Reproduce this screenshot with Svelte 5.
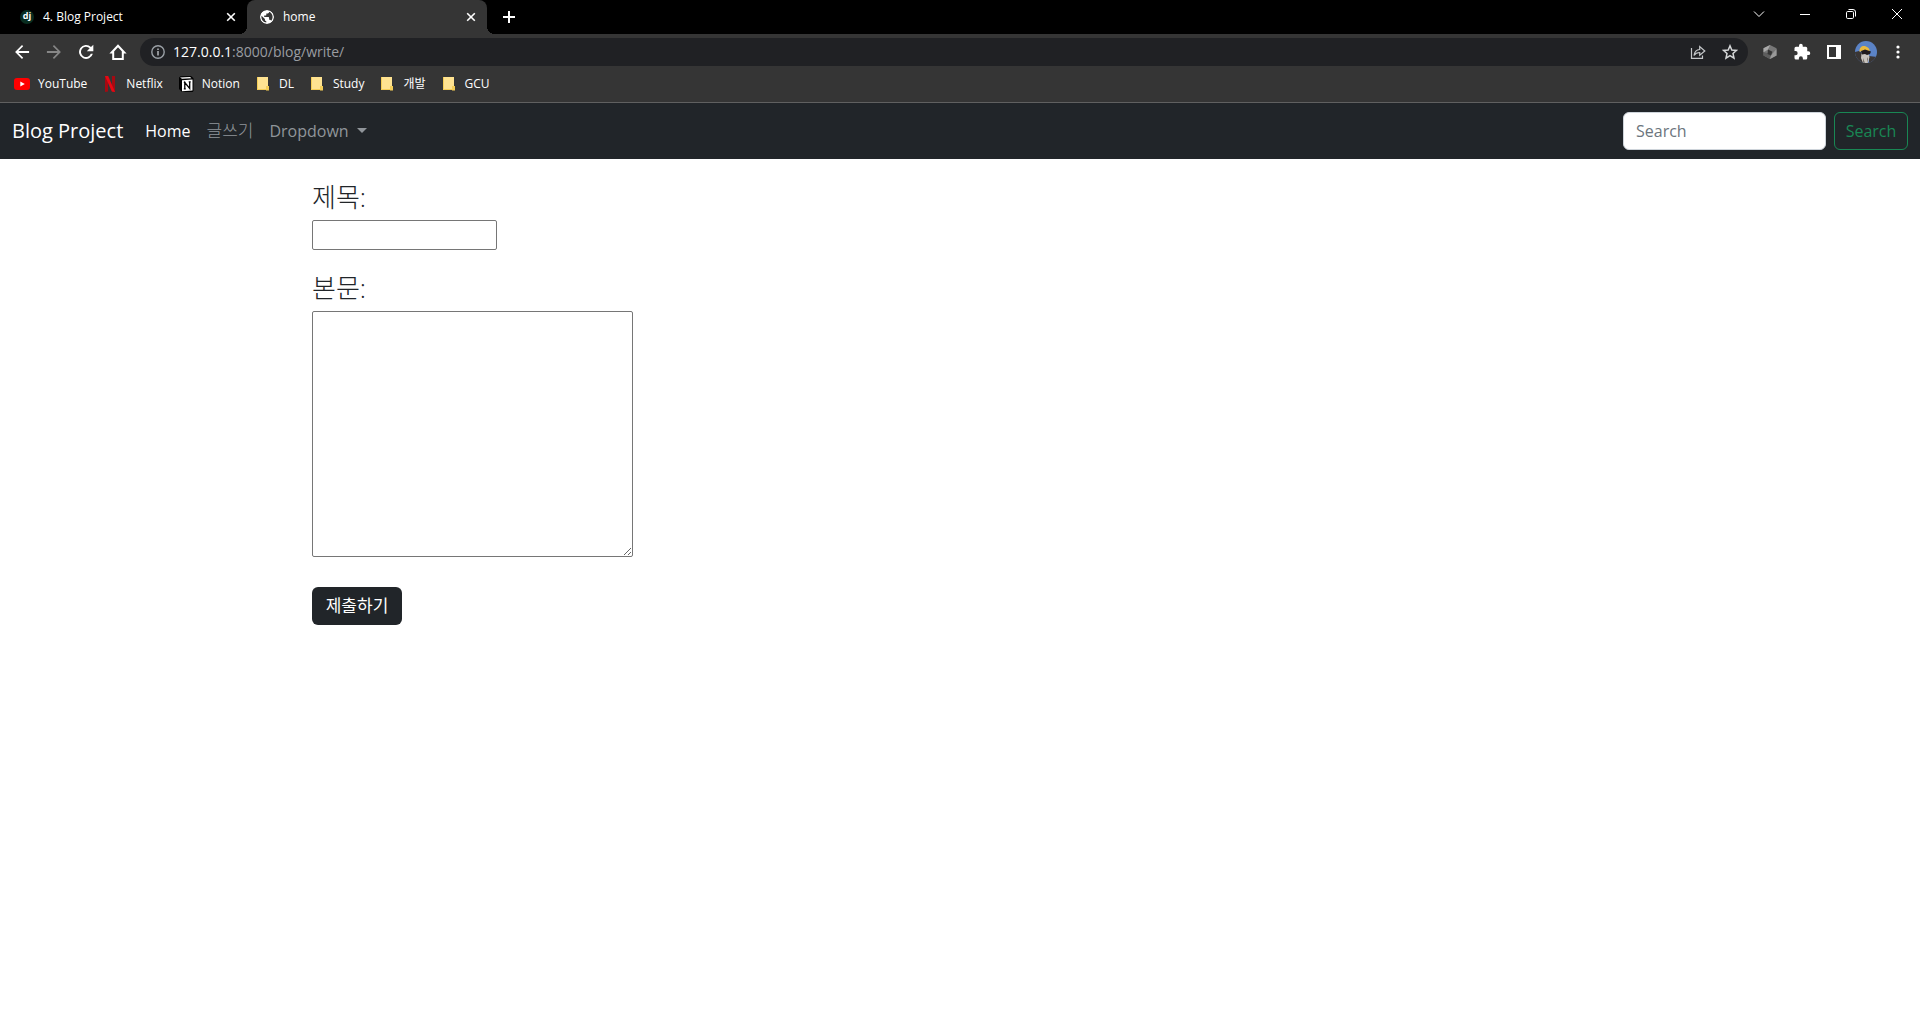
<script lang="ts">
	let title = $state('');
	let content = $state('');
	let query = $state('');

	const tabs = [
		{ title: '4. Blog Project', icon: 'django', active: false },
		{ title: 'home', icon: 'globe', active: true }
	];

	const bookmarks = [
		{ label: 'YouTube', icon: 'youtube' },
		{ label: 'Netflix', icon: 'netflix' },
		{ label: 'Notion', icon: 'notion' },
		{ label: 'DL', icon: 'folder' },
		{ label: 'Study', icon: 'folder' },
		{ label: '개발', icon: 'folder' },
		{ label: 'GCU', icon: 'folder' }
	];
</script>

<div class="browser">
	<div class="tab-strip">
		{#each tabs as tab}
			<div class="tab" class:active={tab.active}>
				{#if tab.icon === 'django'}
					<span class="django">dj</span>
				{:else}
					<svg class="favicon" viewBox="2 2 20 20">
						<path d="M12 2C6.480 2 2 6.480 2 12s4.480 10 10 10 10-4.480 10-10S17.520 2 12 2zm-1 17.930c-3.950-.49-7-3.850-7-7.930 0-.62.08-1.210.21-1.790L9 15v1c0 1.100.9 2 2 2v1.930zm6.900-2.540c-.26-.81-1-1.390-1.900-1.390h-1v-3c0-.55-.45-1-1-1H8v-2h2c.55 0 1-.45 1-1V7h2c1.100 0 2-.9 2-2v-.41c2.930 1.190 5 4.060 5 7.410 0 2.080-.8 3.970-2.100 5.390z" fill="#fff" />
					</svg>
				{/if}
				<span class="tab-title">{tab.title}</span>
				<button type="button" class="tab-close" aria-label="Close tab">
					<svg width="10" height="10" viewBox="0 0 10 10"><path d="M1.200 1.200l7.600 7.600M8.800 1.200l-7.600 7.600" stroke="#fff" stroke-width="1.6" /></svg>
				</button>
			</div>
		{/each}
		<button type="button" class="new-tab" aria-label="New tab">
			<svg width="12" height="12" viewBox="0 0 12 12"><path d="M6 0v12M0 6h12" stroke="#fff" stroke-width="2" /></svg>
		</button>
		<div class="window-controls">
			<button type="button" aria-label="Search tabs">
				<svg width="12" height="12" viewBox="0 0 12 12"><path d="M1 3.500l5 5 5-5" /></svg>
			</button>
			<button type="button" aria-label="Minimize">
				<svg width="10" height="10" viewBox="0 0 10 10"><path d="M0 5.500h10" /></svg>
			</button>
			<button type="button" aria-label="Restore">
				<svg width="10" height="10" viewBox="0 0 10 10"><rect x=".5" y="2.500" width="7" height="7" rx="1.200" /><path d="M2.500.5H7A2.500 2.500 0 0 1 9.500 3v4.500" /></svg>
			</button>
			<button type="button" aria-label="Close">
				<svg width="10" height="10" viewBox="0 0 10 10"><path d="M0 0l10 10M10 0L0 10" /></svg>
			</button>
		</div>
	</div>

	<div class="toolbar">
		<button type="button" class="tool" aria-label="Back">
			<svg width="20" height="20" viewBox="0 0 24 24"><path d="M20.500 10.800H7.700l5.700-5.600L12 3.700 3.700 12l8.300 8.300 1.400-1.500-5.700-5.600h12.800z" fill="#fff" /></svg>
		</button>
		<button type="button" class="tool" aria-label="Forward">
			<svg width="20" height="20" viewBox="0 0 24 24"><path d="M3.500 10.800h12.800l-5.700-5.600L12 3.700l8.300 8.300-8.300 8.300-1.400-1.500 5.700-5.600H3.500z" fill="#868686" /></svg>
		</button>
		<button type="button" class="tool" aria-label="Reload">
			<svg width="20" height="20" viewBox="0 0 24 24"><path d="M18 6A8.400 8.400 0 1 0 20.200 14H17.800A6.100 6.100 0 1 1 16.400 7.600L13 11h7.800V3.300z" fill="#fff" /></svg>
		</button>
		<button type="button" class="tool" aria-label="Home">
			<svg width="20" height="20" viewBox="0 0 20 20"><path d="M3.700 10.500L10 3.800l6.300 6.700H14.800V17H5.200v-6.500z" fill="none" stroke="#fff" stroke-width="2" /></svg>
		</button>
		<div class="omnibox">
			<svg width="14" height="14" viewBox="0 0 14 14"><circle cx="7" cy="7" r="6.200" fill="none" stroke="#9aa0a6" stroke-width="1.400" /><path d="M7 6v4.500M7 3.400v1.500" stroke="#b4b8bc" stroke-width="1.500" /></svg>
			<span class="url"><b>127.0.0.1</b>:8000/blog/write/</span>
			<button type="button" class="tool" aria-label="Share">
				<svg width="16" height="16" viewBox="0 0 16 16"><path d="M1.500 4v10.400h11V11.500M4 11.500C4.600 7.500 6.500 5.700 9.700 5.500V2.500L14.800 7l-5.100 4.200V8.500C7 8.500 5.400 9.400 4 11.500z" fill="none" stroke="#c4c7c9" stroke-width="1.200" /></svg>
			</button>
			<button type="button" class="tool" aria-label="Bookmark this page">
				<svg width="16" height="16" viewBox="0 0 16 16"><path d="M8 1.800l1.800 4.200 4.700.4-3.500 3.100 1 4.600L8 11.700l-4 2.400 1-4.600L1.500 6.400l4.700-.4z" fill="none" stroke="#d5d7d8" stroke-width="1.500" /></svg>
			</button>
		</div>
		<button type="button" class="tool" aria-label="Extension">
			<svg width="14" height="16" viewBox="0 0 14 16"><path d="M7 1l6.500 3.300v7.200L7 15 .5 11.500V4.300z" fill="#777" /><path d="M7 1L.5 4.300v4L5 5.500z" fill="#aaa" /><path d="M.5 8.300v3.200L7 15l1-3.500L4.500 9z" fill="#5d5d5d" /><path d="M8 11.500L7 15l6.500-3.500V5z" fill="#999" /><path d="M5 5.500l4.500 2.300L8 11.500 4.500 10z" fill="#353535" /></svg>
		</button>
		<button type="button" class="tool" aria-label="Extensions">
			<svg width="18" height="18" viewBox="0 0 24 24"><path d="M20.500 11H19V7a2 2 0 0 0-2-2h-4V3.500a2.500 2.500 0 0 0-5 0V5H4a2 2 0 0 0-2 2v3.800h1.500a2.700 2.700 0 0 1 0 5.400H2V20a2 2 0 0 0 2 2h3.800v-1.500a2.700 2.700 0 0 1 5.400 0V22H17a2 2 0 0 0 2-2v-4h1.500a2.500 2.500 0 0 0 0-5z" fill="#fff" /></svg>
		</button>
		<button type="button" class="tool" aria-label="Side panel">
			<svg width="14" height="14" viewBox="0 0 14 14"><path d="M0 0h14v14H0zM2 2v10h7V2z" fill="#fff" fill-rule="evenodd" /></svg>
		</button>
		<button type="button" class="tool" aria-label="Profile">
			<svg width="22" height="22" viewBox="0 0 22 22">
				<defs><clipPath id="avatar"><circle cx="11" cy="11" r="11" /></clipPath></defs>
				<g clip-path="url(#avatar)">
					<path d="M0 0h22v22H0z" fill="#5b83c6" />
					<path d="M0 11l4-1 4 3v9H0zM14 15l8 1v6h-8z" fill="#3a3635" />
					<path d="M6.500 12.500l3-1.500 4 1.500 1 3.500-1.500 6H8l-2-5z" fill="#c9c4bd" />
					<path d="M8 17l2 5H8zM12 18l1-2v6z" fill="#77706b" />
					<path d="M4.500 10.500C4 6 8 4 11 5.500c3 1 4 3 3.500 5z" fill="#e9b93e" />
					<path d="M6 10l4-1.500 6 2-1 2.500-3 1-2-1-3 .5z" fill="#211b1d" />
				</g>
			</svg>
		</button>
		<button type="button" class="tool" aria-label="Menu">
			<svg width="4" height="14" viewBox="0 0 4 14"><g fill="#fff"><circle cx="2" cy="2" r="1.600" /><circle cx="2" cy="7" r="1.600" /><circle cx="2" cy="12" r="1.600" /></g></svg>
		</button>
	</div>

	<div class="bookmarks">
		{#each bookmarks as bookmark}
			<a href="#{bookmark.label}">
				<svg width="16" height="16" viewBox="0 0 16 16">
					{#if bookmark.icon === 'youtube'}
						<rect y="2" width="16" height="12" rx="3" fill="#f00" />
						<path d="M6.300 5.500v5L10.800 8z" fill="#fff" />
					{:else if bookmark.icon === 'netflix'}
						<path d="M3 0h3v15.500L3 16zM10 0h3v16l-3-.5z" fill="#a50a12" />
						<path d="M3 0h3.200L13 16l-3.200-.5z" fill="#e50914" />
					{:else if bookmark.icon === 'notion'}
						<path d="M1 1.500L2.500.2 13 0l2.500 2.200V15l-1 1H4l-3-3z" fill="#000" />
						<path d="M2 1.500l10-.5 1.500 1.200-9.500.5z" fill="#fff" />
						<path d="M4 4.200l10.500-.6v11L4 15.200z" fill="#fff" />
						<path d="M6.800 13V6.500l4.900 6V5.800M5.800 6.400h1.800M5.800 12.900h2M10.700 5.900h2" fill="none" stroke="#000" stroke-width="1.300" />
					{:else}
						<path d="M2 1h11v13H2z" fill="#ffe391" />
						<path d="M2 14V1h1v12h8v1zM11 10h3v4.500h-3z" fill="#f5ce57" />
					{/if}
				</svg>
				<span>{bookmark.label}</span>
			</a>
		{/each}
	</div>
</div>

<nav class="navbar">
	<a class="brand" href="#blog">Blog Project</a>
	<a class="nav-link current" href="#home">Home</a>
	<a class="nav-link hangul" href="#write">글쓰기</a>
	<a class="nav-link dropdown" href="#dropdown">Dropdown</a>
	<form class="search">
		<input type="search" placeholder="Search" aria-label="Search" bind:value={query} />
		<button type="submit">Search</button>
	</form>
</nav>

<main>
	<form class="write-form">
		<label for="title">제목:</label>
		<input id="title" type="text" bind:value={title} />
		<label for="content">본문:</label>
		<textarea id="content" bind:value={content}></textarea>
		<button type="submit">제출하기</button>
	</form>
</main>

<style>
	:global(body) {
		margin: 0;
		background: #fff;
		color: #212529;
		font-family: 'Open Sans', 'Noto Sans CJK KR', sans-serif;
		font-size: 16px;
		line-height: 24px;
	}

	* {
		box-sizing: border-box;
	}

	a {
		color: inherit;
		text-decoration: none;
		white-space: nowrap;
	}

	button,
	input,
	textarea {
		font: inherit;
		margin: 0;
	}

	.browser {
		background: #353535;
		border-bottom: 1px solid #606060;
		color: #fff;
		font-size: 12px;
		line-height: 16px;
	}

	.browser button {
		display: flex;
		align-items: center;
		justify-content: center;
		flex: none;
		padding: 0;
		border: 0;
		background: none;
	}

	.browser svg {
		display: block;
		flex: none;
	}

	.tab-strip {
		display: flex;
		height: 34px;
		padding-left: 7px;
		background: #000;
	}

	.tab {
		position: relative;
		display: flex;
		align-items: center;
		width: 240px;
		padding: 0 8px 0 13px;
	}

	.tab.active {
		background: #353535;
		border-radius: 8px 8px 0 0;
	}

	.tab.active::before,
	.tab.active::after {
		content: '';
		position: absolute;
		bottom: 0;
		width: 8px;
		height: 8px;
	}

	.tab.active::before {
		right: 100%;
		background: radial-gradient(circle at 0 0, #000 8px, #353535 8px);
	}

	.tab.active::after {
		left: 100%;
		background: radial-gradient(circle at 100% 0, #000 8px, #353535 8px);
	}

	.favicon,
	.django {
		width: 14px;
		height: 14px;
		border-radius: 50%;
	}

	.django {
		background: #092e20;
		font-size: 9px;
		font-weight: 700;
		line-height: 12px;
		text-align: center;
	}

	.tab-title {
		flex: 1;
		margin-left: 9px;
	}

	.browser .tab-close {
		width: 16px;
		height: 16px;
	}

	.browser .new-tab {
		width: 28px;
		margin-left: 8px;
	}

	.window-controls {
		display: flex;
		margin-left: auto;
	}

	.browser .window-controls button {
		width: 46px;
		height: 28px;
	}

	.window-controls svg {
		fill: none;
		stroke: #fff;
		stroke-width: 1;
	}

	.toolbar {
		display: flex;
		align-items: center;
		gap: 4px;
		height: 36px;
		padding: 0 8px;
	}

	.browser .tool {
		width: 28px;
		height: 28px;
	}

	.omnibox {
		display: flex;
		align-items: center;
		flex: 1;
		gap: 4px;
		height: 28px;
		margin: 0 4px;
		padding: 0 4px 0 11px;
		border-radius: 14px;
		background: #202124;
	}

	.url {
		flex: 1;
		margin-left: 4px;
		color: #9a9da1;
		font-size: 14px;
	}

	.url b {
		color: #fff;
		font-weight: 400;
	}

	.bookmarks {
		display: flex;
		gap: 15px;
		height: 32px;
		padding: 6px 14px;
	}

	.bookmarks a {
		display: flex;
		gap: 8px;
	}

	.navbar {
		display: flex;
		align-items: center;
		height: 56px;
		padding: 0 12px;
		background: #212529;
		color: #fff;
	}

	.brand {
		margin-right: 14px;
		font-size: 20px;
	}

	.nav-link {
		padding: 0 8px;
		color: #90959a;
	}

	.nav-link.current {
		color: #fff;
	}

	.nav-link.hangul {
		font-size: 17px;
		font-weight: 300;
	}

	.dropdown::after {
		content: '';
		display: inline-block;
		margin-left: 8px;
		vertical-align: 4px;
		border: 5px solid transparent;
		border-top-color: currentColor;
		border-bottom: 0;
	}

	.search {
		display: flex;
		gap: 8px;
		margin-left: auto;
	}

	.search input {
		width: 203px;
		height: 38px;
		padding: 0 12px;
		border: 1px solid #ced4da;
		border-radius: 6px;
		background: #fff;
		appearance: none;
	}

	.search input::placeholder {
		color: #6c757d;
	}

	.search button {
		width: 74px;
		padding: 0;
		border: 1px solid #198754;
		border-radius: 6px;
		background: none;
		color: #198754;
	}

	main {
		max-width: 1320px;
		margin: 0 auto;
		padding: 20px 12px;
	}

	.write-form {
		display: flex;
		flex-direction: column;
		align-items: flex-start;
	}

	.write-form label {
		margin-bottom: 5px;
		font-size: 26px;
		font-weight: 300;
		line-height: 36px;
	}

	.write-form input,
	.write-form textarea {
		border: 1px solid #767676;
		border-radius: 2px;
		background: #fff;
	}

	.write-form input {
		width: 185px;
		height: 30px;
		margin-bottom: 20px;
	}

	.write-form textarea {
		width: 321px;
		height: 246px;
		margin-bottom: 30px;
	}

	.write-form button {
		width: 90px;
		height: 38px;
		padding: 0;
		border: 0;
		border-radius: 6px;
		background: #212529;
		color: #fff;
		font-size: 17px;
	}
</style>
